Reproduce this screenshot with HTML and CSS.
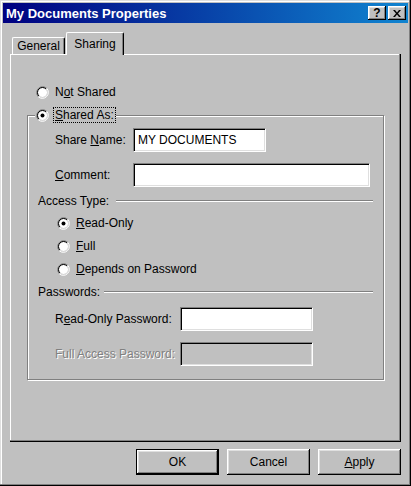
FILE: index.html
```html
<!DOCTYPE html>
<html>
<head>
<meta charset="utf-8">
<title>My Documents Properties</title>
<link rel="stylesheet" href="styles.css">
</head>
<body>
<div class="window">
  <div class="titlebar">
    <span class="title">My Documents Properties</span>
    <div class="caption-buttons">
      <div class="cbtn help">?</div>
      <div class="cbtn">
        <svg width="8" height="7" viewBox="0 0 8 7"><path d="M0 0h2l2 2.5L6 0h2L5 3.5 8 7H6L4 4.5 2 7H0l3-3.5z" fill="#000"/></svg>
      </div>
    </div>
  </div>
  <div class="content">
    <div class="tabs">
      <div class="tab">General</div>
      <div class="tab active">Sharing</div>
    </div>
    <div class="panel">
      <div class="radio-row outer">
        <svg class="radio" width="13" height="13" viewBox="0 0 13 13"><circle cx="6.5" cy="6.5" r="4.6" fill="#fff"/><path d="M2.26 10.74A6 6 0 0 1 10.74 2.26" stroke="#808080" fill="none"/><path d="M10.74 2.26A6 6 0 0 1 2.26 10.74" stroke="#fff" fill="none"/><path d="M2.96 10.04A5 5 0 0 1 10.04 2.96" stroke="#000" fill="none"/><path d="M10.04 2.96A5 5 0 0 1 2.96 10.04" stroke="#dfdfdf" fill="none"/></svg>
        <span>N<u>o</u>t Shared</span>
      </div>
      <div class="group">
        <div class="legend">
          <svg class="radio" width="13" height="13" viewBox="0 0 13 13"><circle cx="6.5" cy="6.5" r="4.6" fill="#fff"/><path d="M2.26 10.74A6 6 0 0 1 10.74 2.26" stroke="#808080" fill="none"/><path d="M10.74 2.26A6 6 0 0 1 2.26 10.74" stroke="#fff" fill="none"/><path d="M2.96 10.04A5 5 0 0 1 10.04 2.96" stroke="#000" fill="none"/><path d="M10.04 2.96A5 5 0 0 1 2.96 10.04" stroke="#dfdfdf" fill="none"/><circle cx="6.5" cy="6.5" r="2" fill="#000"/></svg>
          <span class="focus"><u>S</u>hared As:</span>
        </div>
        <div class="field share">
          <span class="lbl">Share <u>N</u>ame:</span>
          <div class="box w-short">MY DOCUMENTS</div>
        </div>
        <div class="field gap11">
          <span class="lbl"><u>C</u>omment:</span>
          <div class="box w-long"></div>
        </div>
        <div class="section">
          <span>Access Type:</span>
          <div class="rule"></div>
        </div>
        <div class="radio-row inner">
          <svg class="radio" width="13" height="13" viewBox="0 0 13 13"><circle cx="6.5" cy="6.5" r="4.6" fill="#fff"/><path d="M2.26 10.74A6 6 0 0 1 10.74 2.26" stroke="#808080" fill="none"/><path d="M10.74 2.26A6 6 0 0 1 2.26 10.74" stroke="#fff" fill="none"/><path d="M2.96 10.04A5 5 0 0 1 10.04 2.96" stroke="#000" fill="none"/><path d="M10.04 2.96A5 5 0 0 1 2.96 10.04" stroke="#dfdfdf" fill="none"/><circle cx="6.5" cy="6.5" r="2" fill="#000"/></svg>
          <span><u>R</u>ead-Only</span>
        </div>
        <div class="radio-row inner">
          <svg class="radio" width="13" height="13" viewBox="0 0 13 13"><circle cx="6.5" cy="6.5" r="4.6" fill="#fff"/><path d="M2.26 10.74A6 6 0 0 1 10.74 2.26" stroke="#808080" fill="none"/><path d="M10.74 2.26A6 6 0 0 1 2.26 10.74" stroke="#fff" fill="none"/><path d="M2.96 10.04A5 5 0 0 1 10.04 2.96" stroke="#000" fill="none"/><path d="M10.04 2.96A5 5 0 0 1 2.96 10.04" stroke="#dfdfdf" fill="none"/></svg>
          <span><u>F</u>ull</span>
        </div>
        <div class="radio-row inner">
          <svg class="radio" width="13" height="13" viewBox="0 0 13 13"><circle cx="6.5" cy="6.5" r="4.6" fill="#fff"/><path d="M2.26 10.74A6 6 0 0 1 10.74 2.26" stroke="#808080" fill="none"/><path d="M10.74 2.26A6 6 0 0 1 2.26 10.74" stroke="#fff" fill="none"/><path d="M2.96 10.04A5 5 0 0 1 10.04 2.96" stroke="#000" fill="none"/><path d="M10.04 2.96A5 5 0 0 1 2.96 10.04" stroke="#dfdfdf" fill="none"/></svg>
          <span><u>D</u>epends on Password</span>
        </div>
        <div class="section pw">
          <span>Passwords:</span>
          <div class="rule"></div>
        </div>
        <div class="field pw-first">
          <span class="lbl wide">R<u>e</u>ad-Only Password:</span>
          <div class="box w-short"></div>
        </div>
        <div class="field gap11">
          <span class="lbl wide disabled">Full Access Password:</span>
          <div class="box w-short off"></div>
        </div>
      </div>
    </div>
    <div class="buttons">
      <div class="btn default">OK</div>
      <div class="btn">Cancel</div>
      <div class="btn"><span><u>A</u>pply</span></div>
    </div>
  </div>
</div>
</body>
</html>
```
FILE: styles.css
```css
* { box-sizing: border-box; }
html, body { margin: 0; padding: 0; }
body {
  background: #c0c0c0;
  font-family: "Liberation Sans", Arial, sans-serif;
  font-size: 12px;
  color: #000;
}
u { text-decoration: underline; text-underline-offset: 1px; }

.window {
  width: 411px;
  height: 486px;
  background: #c0c0c0;
  padding: 3px;
  display: flex;
  flex-direction: column;
  box-shadow: inset -1px -1px #000, inset -2px -2px #808080, inset 1px 1px #dfdfdf, inset 2px 2px #fff;
}

.titlebar {
  height: 20px;
  display: flex;
  align-items: center;
  justify-content: space-between;
  padding: 0 2px 0 3px;
  background: linear-gradient(to right, #000080, #1084d0);
}
.title { color: #fff; font-weight: bold; font-size: 13px; }
.caption-buttons { display: flex; gap: 2px; }
.cbtn {
  width: 18px;
  height: 14px;
  background: #c0c0c0;
  display: flex;
  align-items: center;
  justify-content: center;
  box-shadow: inset -1px -1px #000, inset 1px 1px #fff, inset -2px -2px #808080, inset 2px 2px #dfdfdf;
}
.cbtn.help { font-weight: bold; font-size: 12px; line-height: 14px; }

.content {
  flex: 1;
  padding: 9px 7px 0 7px;
  display: flex;
  flex-direction: column;
}

.tabs {
  display: flex;
  align-items: flex-end;
  height: 22px;
  padding-left: 2px;
}
.tab {
  width: 53px;
  height: 17px;
  background: #c0c0c0;
  border-top: 1px solid #fff;
  border-left: 1px solid #fff;
  border-right: 1px solid #000;
  border-radius: 2px 2px 0 0;
  box-shadow: inset -1px 0 #808080;
  display: flex;
  align-items: center;
  justify-content: center;
}
.tab.active {
  width: 58px;
  height: 23px;
  margin-left: 1px;
  margin-bottom: -1px;
  padding-bottom: 1px;
  position: relative;
  z-index: 1;
}

.panel {
  height: 388px;
  padding: 30px 17px 0 17px;
  background: #c0c0c0;
  box-shadow: inset -1px -1px #000, inset -2px -2px #808080, inset 1px 1px #fff;
}

.radio { display: block; flex: none; }
.radio-row {
  display: flex;
  align-items: center;
  height: 16px;
  gap: 6px;
}
.radio-row.outer { margin-left: 9px; }
.radio-row.inner { margin-left: 19px; margin-top: 7px; }

.group {
  margin-top: 15px;
  border: 1px solid #808080;
  box-shadow: inset 1px 1px #fff, 1px 1px #fff;
  padding: 0 10px 13px 10px;
}
.legend {
  display: flex;
  align-items: center;
  width: fit-content;
  height: 16px;
  margin: -9px 0 0 -3px;
  padding: 0 1px;
  gap: 5px;
  background: #c0c0c0;
}
.focus {
  height: 14px;
  line-height: 14px;
  padding: 0 1px;
  outline: 1px dotted #000;
}

.field {
  display: flex;
  align-items: center;
  margin-left: 17px;
}
.field.share { margin-top: 5px; }
.field.gap11 { margin-top: 11px; }
.field.pw-first { margin-top: 8px; }
.lbl { width: 78px; flex: none; }
.lbl.wide { width: 125px; }
.lbl.disabled { color: #808080; text-shadow: 1px 1px 0 #fff; }

.box {
  height: 24px;
  background: #fff;
  border: 1px solid;
  border-color: #808080 #fff #fff #808080;
  box-shadow: inset 1px 1px #000, inset -1px -1px #dfdfdf;
  padding: 0 4px;
  display: flex;
  align-items: center;
}
.box.off { background: #c0c0c0; }
.w-short { width: 133px; }
.w-long { width: 237px; }

.section {
  display: flex;
  align-items: center;
  height: 14px;
  gap: 7px;
  margin-top: 7px;
}
.section.pw { gap: 4px; margin-top: 8px; }
.rule {
  flex: 1;
  border-top: 1px solid #808080;
  border-bottom: 1px solid #fff;
}

.buttons {
  display: flex;
  justify-content: flex-end;
  gap: 8px;
  margin-top: 7px;
}
.btn {
  width: 83px;
  height: 26px;
  background: #c0c0c0;
  display: flex;
  align-items: center;
  justify-content: center;
  box-shadow: inset -1px -1px #000, inset 1px 1px #fff, inset -2px -2px #808080, inset 2px 2px #dfdfdf;
}
.btn.default { border: 1px solid #000; }
```
